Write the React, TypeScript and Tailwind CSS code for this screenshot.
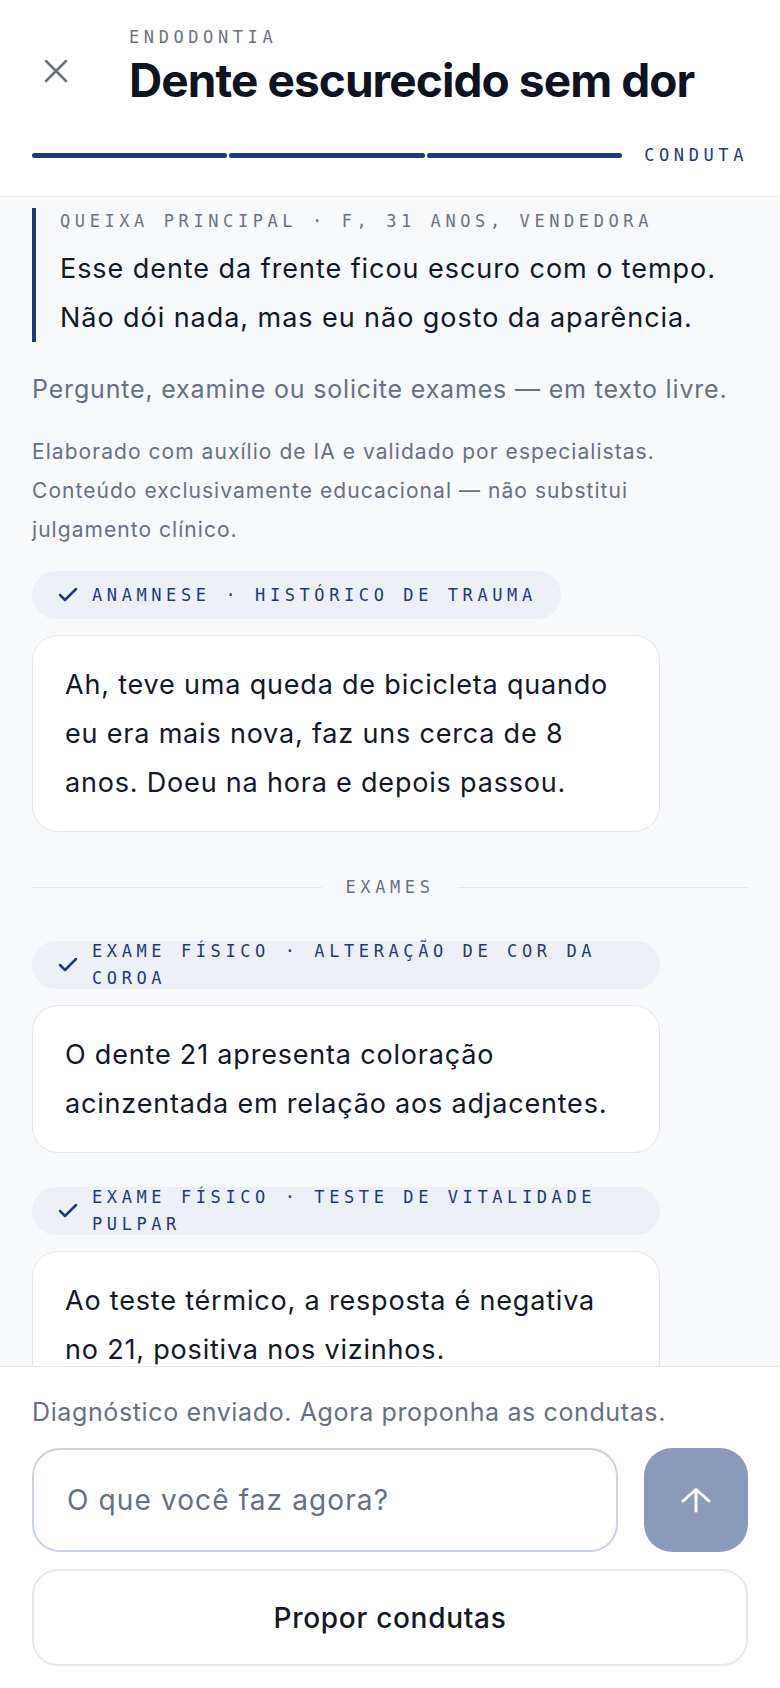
import React from 'react';
import { Check } from 'lucide-react';

const mono = "font-['DejaVu_Sans_Mono',monospace]";

function Chip({ text }: { text: string }) {
  return (
    <div className="flex h-12 max-w-[628px] items-center gap-3 self-start rounded-full bg-[#edf0f7] px-6">
      <Check className="h-6 w-6 shrink-0 text-[#1e3a7b]" strokeWidth={2.5} />
      <span className={`${mono} text-[17px] leading-[27px] tracking-[0.27em] text-[#1e3a7b]`}>{text}</span>
    </div>
  );
}

function Bubble({ children }: { children: React.ReactNode }) {
  return (
    <div className="mt-4 max-w-[628px] self-start rounded-[26px] border border-[#e4e6eb] bg-white px-8 py-6 text-[27px] leading-[49px] tracking-[0.03em] text-[#111827]">
      {children}
    </div>
  );
}

export default function App() {
  return (
    <div className="flex h-[1688px] w-[780px] flex-col overflow-hidden bg-[#f8f9fb] font-['Inter',sans-serif]">
      {/* header */}
      <header className="shrink-0 border-b border-[#e5e7eb] bg-white px-8 pb-[33px] pt-[27px]">
        <div className="flex">
          <div className="w-[97px] shrink-0 pl-3 pt-[32px]">
            <svg width="24" height="24" viewBox="0 0 24 24" fill="none" stroke="#6b7280" strokeWidth="2.5" strokeLinecap="round">
              <path d="M2 2 22 22M22 2 2 22" />
            </svg>
          </div>
          <div>
            <div className={`${mono} text-[17px] leading-[20px] tracking-[0.27em] text-[#6b7280]`}>ENDODONTIA</div>
            <h1 className="mt-[7px] text-[46px] font-bold leading-[52px] tracking-[-0.02em] text-[#0d1321]">
              Dente escurecido sem dor
            </h1>
          </div>
        </div>
        <div className="mt-[41px] flex items-center gap-[22px]">
          <div className="flex flex-1 gap-[2px]">
            <div className="h-[5px] flex-1 rounded-full bg-[#1e3a7b]" />
            <div className="h-[5px] flex-1 rounded-full bg-[#1e3a7b]" />
            <div className="h-[5px] flex-1 rounded-full bg-[#1e3a7b]" />
          </div>
          <span className={`${mono} text-[17px] leading-[16px] tracking-[0.27em] text-[#1e3a7b]`}>CONDUTA</span>
        </div>
      </header>

      {/* conversation */}
      <main className="flex min-h-0 flex-1 flex-col overflow-hidden px-8 pt-[11px]">
        <div className="border-l-4 border-[#1e3a7b] pl-6">
          <div className={`${mono} text-[17px] leading-[26px] tracking-[0.27em] text-[#6b7280]`}>
            QUEIXA PRINCIPAL · F, 31 ANOS, VENDEDORA
          </div>
          <p className="mt-[10px] text-[27px] leading-[49px] tracking-[0.035em] text-[#111827]">
            Esse dente da frente ficou escuro com o tempo. Não dói nada, mas eu não gosto da aparência.
          </p>
        </div>

        <p className="mt-[29px] text-[25px] leading-[36px] tracking-[0.033em] text-[#667085]">
          Pergunte, examine ou solicite exames — em texto livre.
        </p>
        <p className="mt-[25px] text-[21px] leading-[39px] tracking-[0.05em] text-[#667085]">
          Elaborado com auxílio de IA e validado por especialistas. Conteúdo exclusivamente educacional — não
          substitui julgamento clínico.
        </p>

        <div className="mt-[22px] flex flex-col">
          <Chip text="ANAMNESE · HISTÓRICO DE TRAUMA" />
          <Bubble>Ah, teve uma queda de bicicleta quando eu era mais nova, faz uns cerca de 8 anos. Doeu na hora e depois passou.</Bubble>
        </div>

        <div className="mt-[45px] flex items-center gap-6">
          <div className="h-px flex-1 bg-[#e5e7eb]" />
          <span className={`${mono} text-[17px] leading-[20px] tracking-[0.27em] text-[#6b7280]`}>EXAMES</span>
          <div className="h-px flex-1 bg-[#e5e7eb]" />
        </div>

        <div className="mt-[44px] flex flex-col">
          <Chip text="EXAME FÍSICO · ALTERAÇÃO DE COR DA COROA" />
          <Bubble>O dente 21 apresenta coloração acinzentada em relação aos adjacentes.</Bubble>
        </div>

        <div className="mt-[34px] flex flex-col">
          <Chip text="EXAME FÍSICO · TESTE DE VITALIDADE PULPAR" />
          <Bubble>Ao teste térmico, a resposta é negativa no 21, positiva nos vizinhos.</Bubble>
        </div>
      </main>

      {/* composer */}
      <footer className="shrink-0 border-t border-[#e5e7eb] bg-white px-8 pb-[22px] pt-[28px]">
        <p className="text-[25px] leading-[34px] tracking-[0.025em] text-[#667085]">
          Diagnóstico enviado. Agora proponha as condutas.
        </p>
        <div className="mt-[19px] flex gap-[26px]">
          <div className="flex h-[104px] flex-1 items-center rounded-[28px] border-2 border-[#c9d1e4] bg-white px-[33px] text-[28px] tracking-[0.04em] text-[#667085]">
            O que você faz agora?
          </div>
          <button className="flex h-[104px] w-[104px] items-center justify-center rounded-[28px] bg-[#8a9aba]">
            <svg width="30" height="26" viewBox="0 0 30 26" fill="none" stroke="white" strokeWidth="3" strokeLinecap="round" strokeLinejoin="round">
              <path d="M15 24V2.5M2 14 15 2.5 28 14" />
            </svg>
          </button>
        </div>
        <button className="mt-[17px] flex h-[97px] w-full items-center justify-center rounded-[26px] border-2 border-[#e7e8ec] bg-white text-[28px] font-medium tracking-[0.025em] text-[#111827]">
          Propor condutas
        </button>
      </footer>
    </div>
  );
}
